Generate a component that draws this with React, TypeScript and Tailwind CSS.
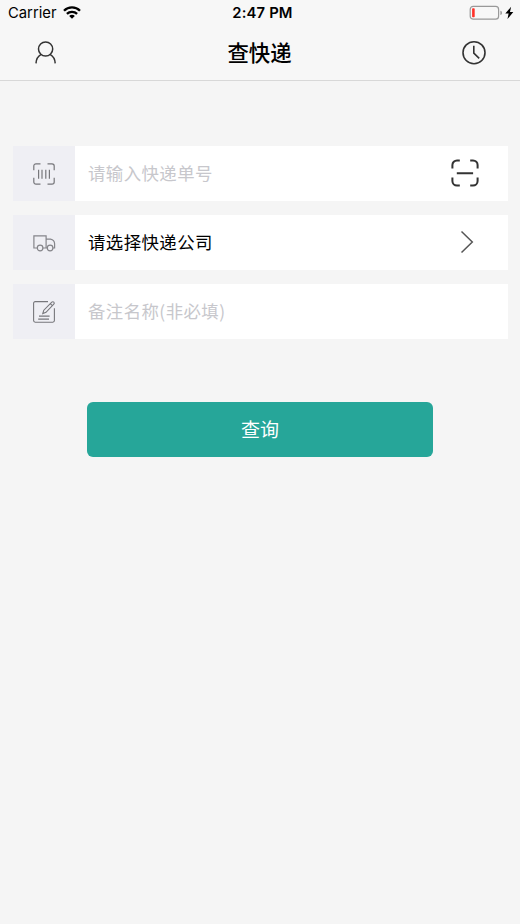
import React from 'react';

interface FormRowProps {
  icon: React.ReactNode;
  label: string;
  placeholder?: boolean;
  action?: React.ReactNode;
}

const UserIcon = () => (
  <svg width="24" height="26" viewBox="0 0 24 26" fill="none" stroke="#333" strokeWidth="1.5">
    <circle cx="12.6" cy="9" r="7.1" />
    <path d="M3 23.4c.2-4.2 2.2-7.4 5.2-9M22.2 23.4c-.2-4.2-2.2-7.4-5.2-9" />
  </svg>
);

const ClockIcon = () => (
  <svg width="26" height="26" viewBox="0 0 26 26" fill="none" stroke="#333" strokeWidth="1.6">
    <circle cx="13" cy="12.7" r="11" />
    <path d="M12.8 5.8v7.3l5.4 5.2" />
  </svg>
);

const BarcodeIcon = () => (
  <svg width="24" height="24" viewBox="0 0 24 24" fill="none" stroke="#77777b" strokeWidth="1.2">
    <path d="M1.8 8.2V4a2.2 2.2 0 0 1 2.2-2.2h4.5M15.5 1.8H20A2.2 2.2 0 0 1 22.2 4v4.2M22.2 15.8V20a2.2 2.2 0 0 1-2.2 2.2h-4.5M8.5 22.2H4A2.2 2.2 0 0 1 1.8 20v-4.2" />
    <path d="M6.6 7.7v9M10 7.7v9M13.8 7.7v9M17.4 7.7v9" />
  </svg>
);

const TruckIcon = () => (
  <svg width="24" height="24" viewBox="0 0 24 24" fill="none" stroke="#85858a" strokeWidth="1.2">
    <path d="M5.2 17H1.9V4.9h12.2V17H11M14.1 8.2h4.4c2.4.5 4 2.3 4.1 4.6V17H21M14.1 17h1.2" />
    <circle cx="8.1" cy="17" r="2.8" />
    <circle cx="18.1" cy="17" r="2.8" />
  </svg>
);

const EditIcon = () => (
  <svg width="24" height="24" viewBox="0 0 24 24" fill="none" stroke="#77777b" strokeWidth="1.1">
    <path d="M16 1.6H3.2A1.6 1.6 0 0 0 1.6 3.2v17.4a1.6 1.6 0 0 0 1.6 1.6h17.6a1.6 1.6 0 0 0 1.6-1.6V8.2" />
    <path d="M10.8 13.5l1-3.3 8-8.1a1.4 1.4 0 0 1 2 2L14 12.3l-3.2 1.2zM18.3 3.7l2 2" />
    <path d="M7 16.1h10.6M6.2 19.1H17" />
  </svg>
);

const ScanIcon = () => (
  <svg width="30" height="30" viewBox="0 0 30 30" fill="none" stroke="#333" strokeWidth="2">
    <path d="M2.4 10.5V7a4.6 4.6 0 0 1 4.6-4.6h2.8M20.2 2.4H23A4.6 4.6 0 0 1 27.6 7v3.5M27.6 19.5V23a4.6 4.6 0 0 1-4.6 4.6h-2.8M9.8 27.6H7A4.6 4.6 0 0 1 2.4 23v-3.5M6.8 15.2h16.3" />
  </svg>
);

const ChevronIcon = () => (
  <svg width="14" height="24" viewBox="0 0 14 24" fill="none" stroke="#555" strokeWidth="1.5">
    <path d="M1.5 1.5L12.3 12 1.5 22.5" />
  </svg>
);

const WifiIcon = () => (
  <svg width="18" height="14" viewBox="0 0 18 14" fill="none" stroke="#000" strokeWidth="2.3">
    <path d="M1 4.7a11.3 11.3 0 0 1 16 0M3.9 7.9a7.2 7.2 0 0 1 10.2 0" />
    <path d="M9 12.8L6.2 10a3.8 3.8 0 0 1 5.6 0z" fill="#000" stroke="none" />
  </svg>
);

const BatteryIcon = () => (
  <svg width="46" height="16" viewBox="0 0 46 16">
    <rect x="1.2" y="1.4" width="28.4" height="12.8" rx="3" fill="none" stroke="#999" strokeWidth="1.2" />
    <rect x="3.1" y="3.3" width="2.6" height="9" rx="0.8" fill="#ff3028" />
    <path d="M31.4 5.8c1.1.4 1.6 1.1 1.6 2.1s-.5 1.7-1.6 2.1z" fill="#999" />
    <path d="M42.1 1.8l-5.8 6.7h3.3l-1.1 5.6 5.8-7.1H41z" fill="#000" />
  </svg>
);

const FormRow: React.FC<FormRowProps> = ({ icon, label, placeholder, action }) => (
  <div className="flex h-[55px] bg-white">
    <div className="flex w-[62px] items-center justify-center bg-[#efeff4]">{icon}</div>
    <div
      className={`flex flex-1 items-center pb-[2px] pl-[13px] text-[17.4px] leading-none tracking-[0.45px] ${
        placeholder ? 'text-[#c7c7cc]' : 'text-black'
      }`}
    >
      {label}
    </div>
    {action}
  </div>
);

const App: React.FC = () => {
  return (
    <div className="h-[924px] w-[520px] overflow-hidden bg-[#f5f5f5] font-['Noto_Sans_CJK_SC',sans-serif]">
      {/* Header */}
      <header className="h-[81px] border-b border-[#d8d8d8] bg-[#f7f7f7]">
        <div className="grid h-[26px] grid-cols-3 items-center pl-2 pr-[5px] font-['Inter',sans-serif] text-[14.8px] leading-none text-black">
          <div className="flex items-center gap-[6px]">
            <span className="pt-px">Carrier</span>
            <WifiIcon />
          </div>
          <span className="pl-[2px] pt-px text-center font-semibold tracking-[0.15px]">2:47 PM</span>
          <div className="flex justify-end">
            <BatteryIcon />
          </div>
        </div>
        <div className="flex h-[54px] items-center justify-between pl-[33px] pr-[33px]">
          <UserIcon />
          <h1 className="pb-[2px] pl-px text-[21.4px] font-medium leading-none text-black">查快递</h1>
          <ClockIcon />
        </div>
      </header>

      {/* Query form */}
      <main className="px-[13px] pt-[65px]">
        <div className="mr-[-1px] flex flex-col gap-[14px]">
          <FormRow
            icon={<BarcodeIcon />}
            label="请输入快递单号"
            placeholder
            action={
              <div className="flex items-center pb-px pr-[28px]">
                <ScanIcon />
              </div>
            }
          />
          <FormRow
            icon={<TruckIcon />}
            label="请选择快递公司"
            action={
              <div className="flex items-center pb-px pr-[34px]">
                <ChevronIcon />
              </div>
            }
          />
          <FormRow icon={<EditIcon />} label="备注名称(非必填)" placeholder />
        </div>
        <button className="mx-auto mt-[63px] block h-[55px] w-[346px] rounded-[6px] bg-[#26a699] pb-[2px] text-[19px] leading-none text-white">
          查询
        </button>
      </main>
    </div>
  );
};

export default App;
